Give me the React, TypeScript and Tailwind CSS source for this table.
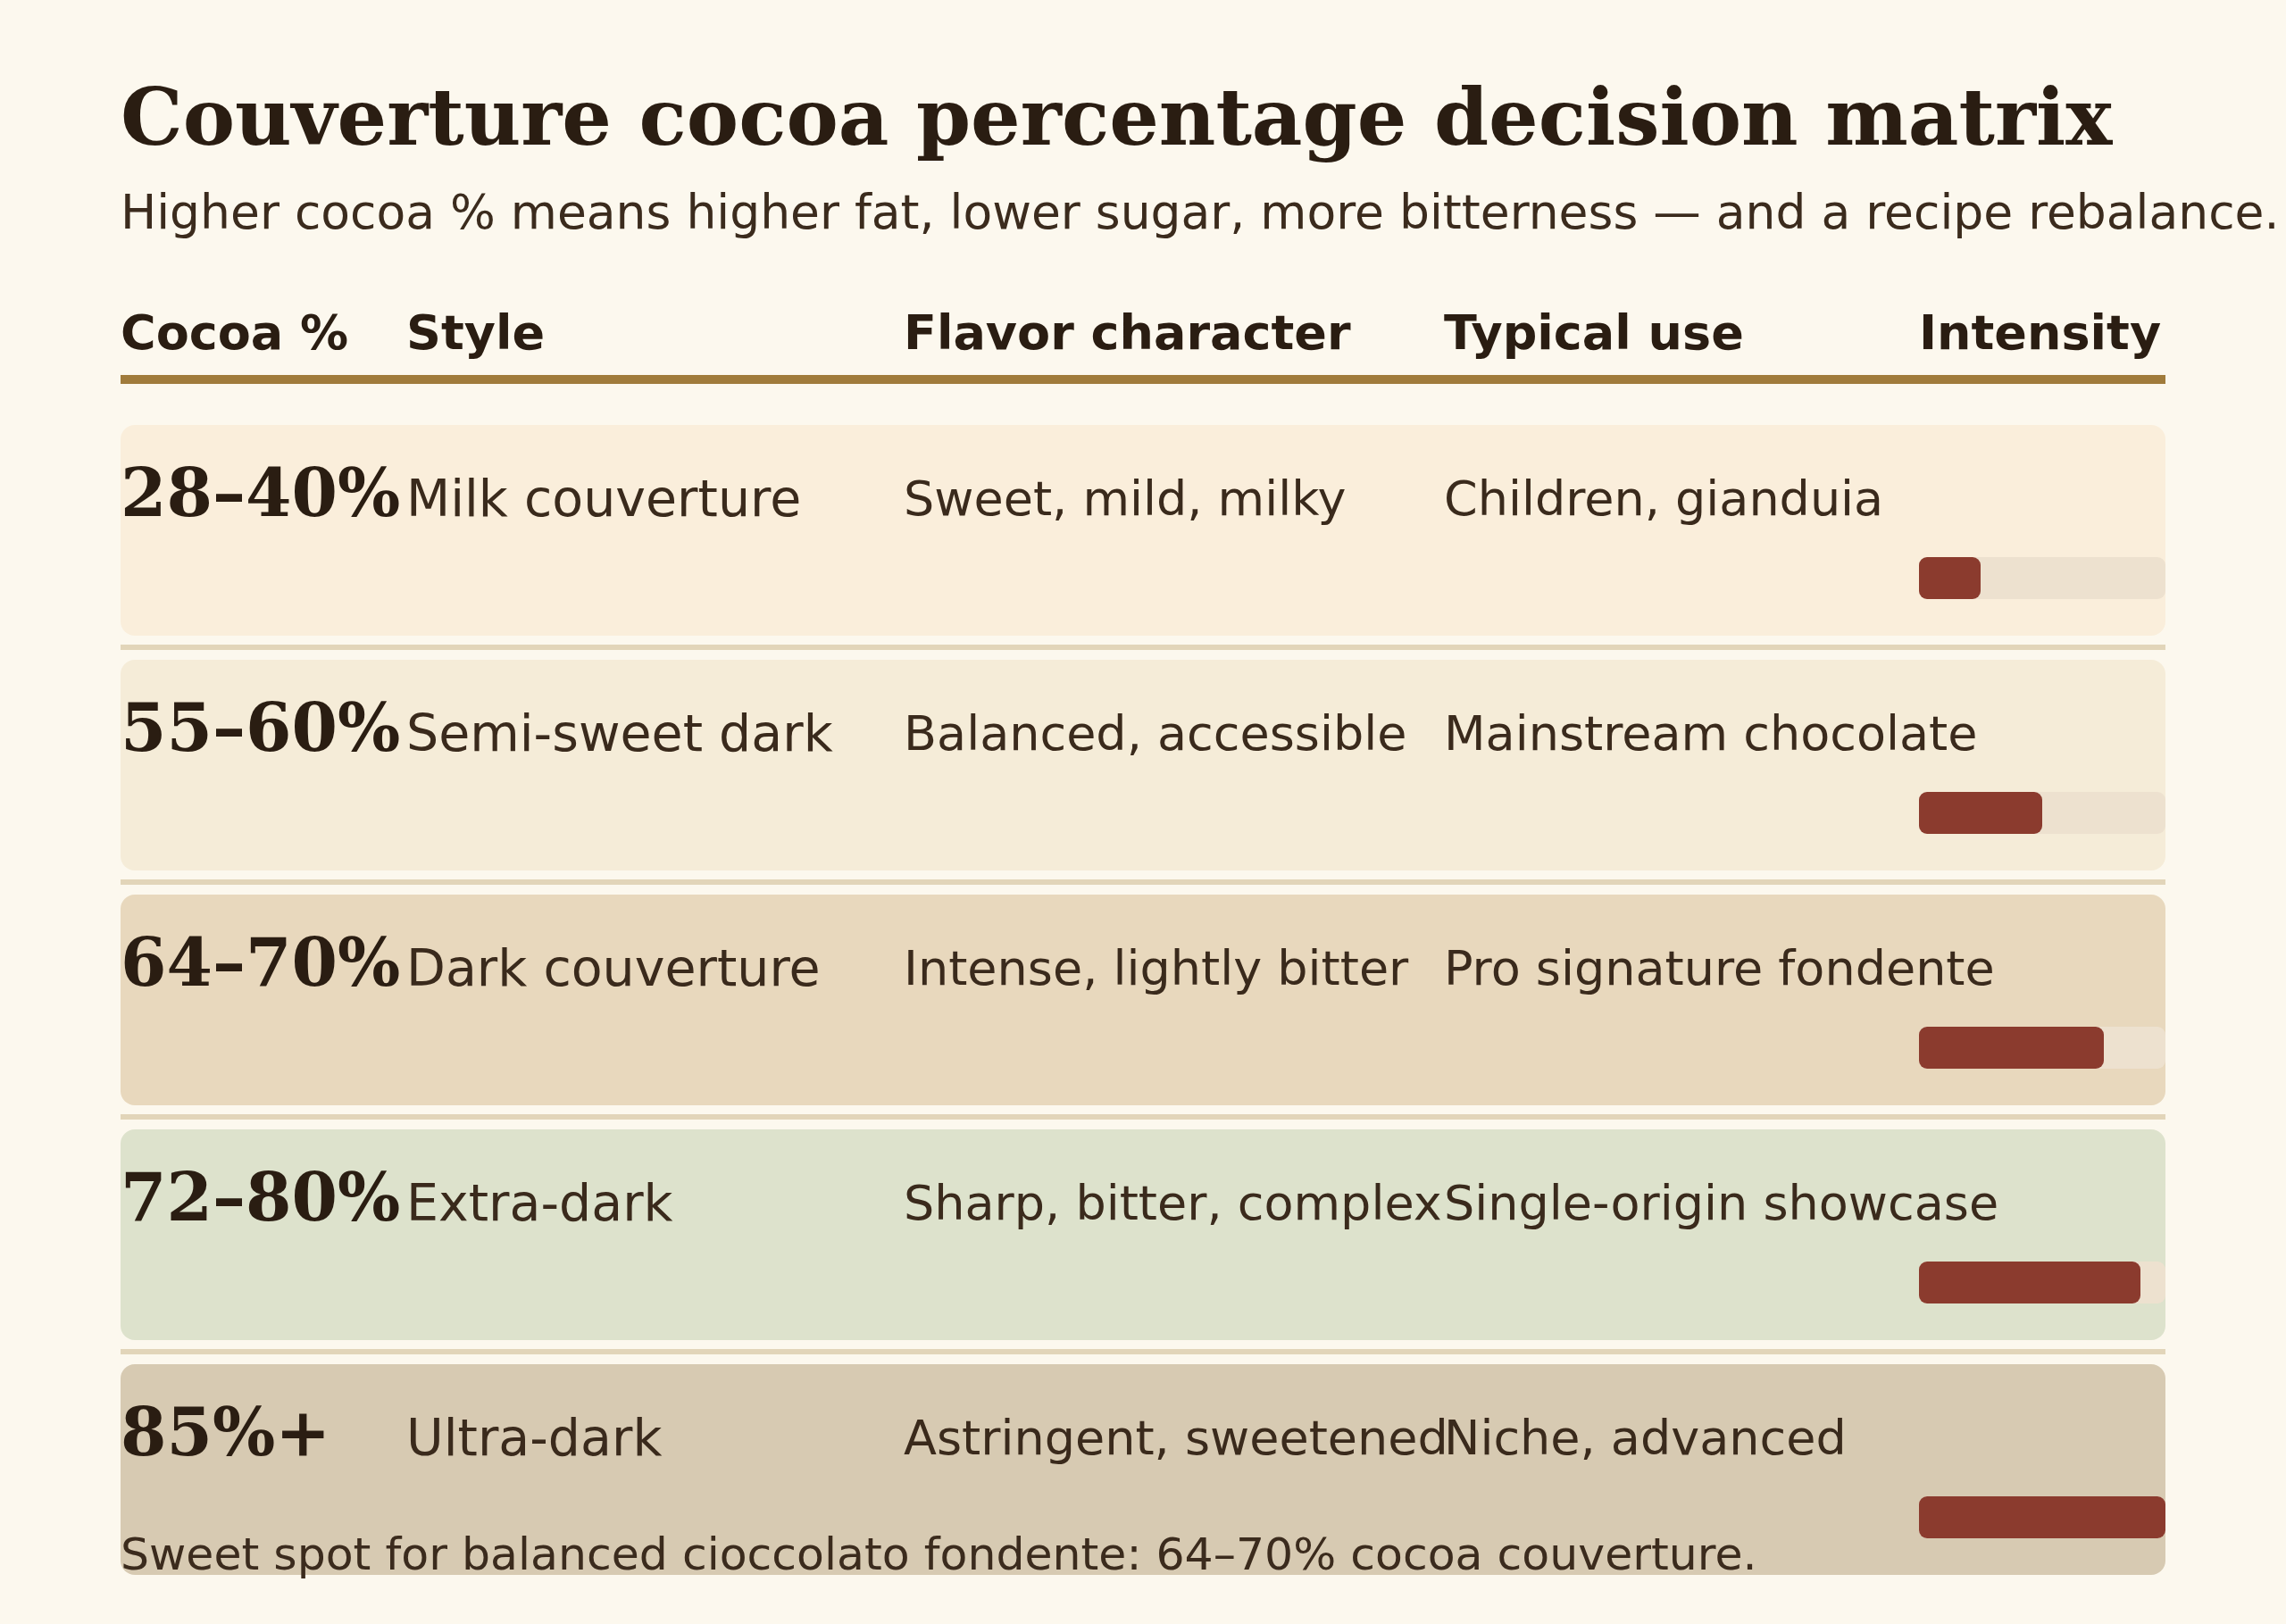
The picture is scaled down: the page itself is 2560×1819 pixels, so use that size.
const rows = [
  { pct: '28–40%', style: 'Milk couverture', flavor: 'Sweet, mild, milky', use: 'Children, gianduia', level: 25, bg: 'bg-[#faeedb]' },
  { pct: '55–60%', style: 'Semi-sweet dark', flavor: 'Balanced, accessible', use: 'Mainstream chocolate', level: 50, bg: 'bg-[#f5ecd8]' },
  { pct: '64–70%', style: 'Dark couverture', flavor: 'Intense, lightly bitter', use: 'Pro signature fondente', level: 75, bg: 'bg-[#e8d8bd]' },
  { pct: '72–80%', style: 'Extra-dark', flavor: 'Sharp, bitter, complex', use: 'Single-origin showcase', level: 90, bg: 'bg-[#dde2cc]' },
  { pct: '85%+', style: 'Ultra-dark', flavor: 'Astringent, sweetened', use: 'Niche, advanced', level: 100, bg: 'bg-[#d7cab2]' },
];

const serif = "font-['DejaVu_Serif','Liberation_Serif',serif]";

function Row({ row }: { row: (typeof rows)[number] }) {
  return (
    <div className={`${row.bg} flex h-[236px] items-start rounded-[16px] whitespace-nowrap`}>
      <div className={`${serif} w-[320px] pt-[39px] text-[74px] leading-[74px] font-bold text-[#2a1d12]`}>
        {row.pct}
      </div>
      <div className="w-[557px] pt-[54px] text-[57px] leading-[57px] text-[#3a2a1c]">{row.style}</div>
      <div className="w-[605px] pt-[56px] text-[54px] leading-[54px] text-[#3a2a1c]">{row.flavor}</div>
      <div className="w-[532px] pt-[56px] text-[54px] leading-[54px] text-[#3a2a1c]">{row.use}</div>
      <div className="w-[276px] pt-[148px]">
        <div className="h-[47px] w-full rounded-[9px] bg-[#ede1cf]">
          <div className="h-full rounded-[9px] bg-[#8b3b2e]" style={{ width: `${row.level}%` }} />
        </div>
      </div>
    </div>
  );
}

export default function App() {
  return (
    <div className="min-h-screen overflow-hidden bg-[#fcf8ee] font-['DejaVu_Sans','Liberation_Sans',sans-serif]">
      <div className="ml-[135px] w-[2290px] pt-[88px]">
        <h1 className={`${serif} text-[87.5px] leading-[87px] font-bold whitespace-nowrap text-[#2a1d12]`}>
          Couverture cocoa percentage decision matrix
        </h1>
        <p className="mt-[36px] text-[53.5px] leading-[54px] whitespace-nowrap text-[#3b2b1d]">
          Higher cocoa % means higher fat, lower sugar, more bitterness — and a recipe rebalance.
        </p>

        <div className="mt-[81px] flex text-[54px] leading-[54px] font-bold whitespace-nowrap text-[#2a1d12]">
          <div className="w-[320px]">Cocoa %</div>
          <div className="w-[557px]">Style</div>
          <div className="w-[605px]">Flavor character</div>
          <div className="w-[532px]">Typical use</div>
          <div className="w-[276px]">Intensity</div>
        </div>
        <div className="mt-[20px] h-[10px] bg-[#a07b3b]" />

        <div className="mt-[46px]">
          {rows.map((row, i) => (
            <div key={row.pct}>
              {i > 0 && <div className="mt-[10px] mb-[11px] h-[6px] bg-[#e2d5b9]" />}
              <Row row={row} />
            </div>
          ))}
        </div>

        <p className="relative -mt-[48px] text-[50.5px] leading-[50.5px] whitespace-nowrap text-[#3b2b1d]">
          Sweet spot for balanced cioccolato fondente: 64–70% cocoa couverture.
        </p>
      </div>
    </div>
  );
}
